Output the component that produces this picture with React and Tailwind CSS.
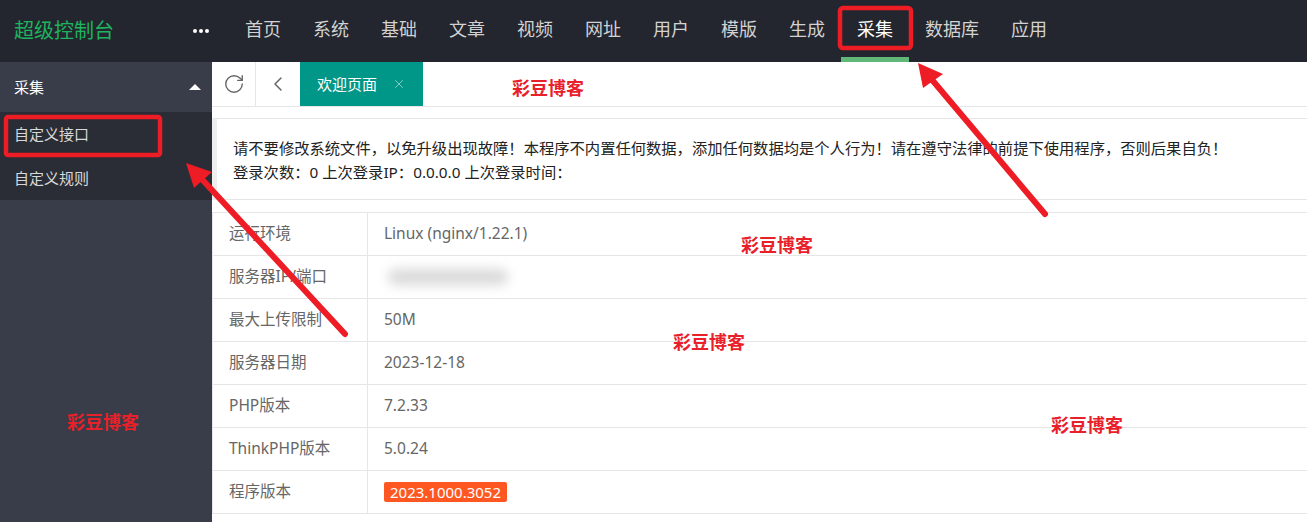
import React from "react";
import { RotateCw, ChevronLeft, X } from "lucide-react";

const navItems = ["首页", "系统", "基础", "文章", "视频", "网址", "用户", "模版", "生成", "采集", "数据库", "应用"];

const rows = [
  ["运行环境", "Linux (nginx/1.22.1)"],
  ["服务器IP/端口", "blur"],
  ["最大上传限制", "50M"],
  ["服务器日期", "2023-12-18"],
  ["PHP版本", "7.2.33"],
  ["ThinkPHP版本", "5.0.24"],
  ["程序版本", "badge"],
];

const marks = [
  "left-[512px] top-[77px]",
  "left-[741px] top-[234px]",
  "left-[673px] top-[331px]",
  "left-[67px] top-[411px]",
  "left-[1051px] top-[414px]",
];

function Header() {
  return (
    <div className="h-[62px] bg-[#23262e] flex items-center shrink-0">
      <div className="w-[193px] pl-[14px] text-[20px] text-[#1fb35f]">超级控制台</div>
      <div className="w-[36px] flex items-center gap-[2px]">
        <span className="w-[4px] h-[4px] bg-white rounded-full" />
        <span className="w-[4px] h-[4px] bg-white rounded-full" />
        <span className="w-[4px] h-[4px] bg-white rounded-full" />
      </div>
      <div className="flex h-full">
        {navItems.map((n) => (
          <div
            key={n}
            className={
              "px-4 h-full flex items-center text-[18px] border-b-[5px] pt-[1px] " +
              (n === "采集" ? "text-white border-[#5fb878]" : "text-[#d2d2d2] border-transparent")
            }
          >
            {n}
          </div>
        ))}
      </div>
    </div>
  );
}

function Sidebar() {
  return (
    <div className="w-[212px] bg-[#393d49] shrink-0">
      <div className="h-[50px] flex items-center justify-between pl-[14px] pr-[11px] text-[15px] text-white">
        <span>采集</span>
        <span className="w-0 h-0 border-x-[6px] border-x-transparent border-b-[6px] border-b-white" />
      </div>
      <div className="bg-[#2a2d35]">
        <div className="h-[44px] flex items-center pl-[14px] text-[15px] text-[#d8d8d8]">自定义接口</div>
        <div className="h-[44px] flex items-center pl-[14px] text-[15px] text-[#d8d8d8]">自定义规则</div>
      </div>
    </div>
  );
}

function Tabs() {
  return (
    <div className="h-[45px] border-b border-[#e6e6e6] flex shrink-0">
      <div className="w-[44px] flex items-center justify-center border-r border-[#e6e6e6] text-[#666]">
        <RotateCw size={22} strokeWidth={1.5} />
      </div>
      <div className="w-[44px] flex items-center justify-center text-[#666]">
        <ChevronLeft size={24} strokeWidth={1.5} />
      </div>
      <div className="w-[123px] bg-[#009688] flex items-center pl-[17px] gap-[15px] text-white text-[15px]">
        <span>欢迎页面</span>
        <X size={14} strokeWidth={1.4} className="text-[#9fd8d2]" />
      </div>
    </div>
  );
}

function Notice() {
  return (
    <div className="mt-[11px] border-y border-[#e6e6e6] border-l-[5px] border-l-[#eeeeee] pl-[16px] pt-[17px] pb-[15px] text-[15.3px] leading-[24px] text-[#222]">
      <div>请不要修改系统文件，以免升级出现故障！本程序不内置任何数据，添加任何数据均是个人行为！请在遵守法律的前提下使用程序，否则后果自负！</div>
      <div>登录次数：0 上次登录IP：0.0.0.0 上次登录时间：</div>
    </div>
  );
}

function InfoTable() {
  return (
    <div className="mt-[12px] border-t border-l border-[#e6e6e6] text-[15.5px] text-[#666]">
      {rows.map(([k, v]) => (
        <div key={k} className="h-[43px] flex border-b border-[#e6e6e6]">
          <div className="w-[155px] flex items-center pl-[16px] border-r border-[#e6e6e6]">{k}</div>
          <div className="flex-1 flex items-center pl-[16px]">
            {v === "blur" ? (
              <div className="w-[120px] h-[16px] bg-[#d9d9d9] rounded-full blur-[6px] ml-[4px]" />
            ) : v === "badge" ? (
              <span className="bg-[#ff5722] text-white px-[6px] h-[20px] leading-[20px] rounded-[2px] text-[15px]">2023.1000.3052</span>
            ) : (
              v
            )}
          </div>
        </div>
      ))}
    </div>
  );
}

function Annotations() {
  return (
    <>
      <svg className="absolute left-0 top-0 pointer-events-none" width="1307" height="522">
        <rect x="840" y="8" width="71" height="40" rx="3" fill="none" stroke="#ee1c25" strokeWidth="4.5" />
        <rect x="6" y="117" width="154" height="38" rx="2" fill="none" stroke="#ee1c25" strokeWidth="4.5" />
        <line x1="1045" y1="214" x2="928" y2="75" stroke="#ee1c25" strokeWidth="6" strokeLinecap="round" />
        <polygon points="918,63 923,88 943,74" fill="#ee1c25" />
        <line x1="345" y1="334" x2="198" y2="175" stroke="#ee1c25" strokeWidth="6" strokeLinecap="round" />
        <polygon points="186,163 194,188 212,172" fill="#ee1c25" />
      </svg>
      {marks.map((m) => (
        <span key={m} className={"absolute text-[18px] font-bold text-[#e8202a] leading-[22px] " + m}>
          彩豆博客
        </span>
      ))}
    </>
  );
}

export default function App() {
  return (
    <div
      className="relative w-[1307px] h-[522px] overflow-hidden flex flex-col bg-white"
      style={{ fontFamily: '"Noto Sans", "Noto Sans CJK SC", sans-serif' }}
    >
      <Header />
      <div className="flex flex-1 min-h-0">
        <Sidebar />
        <div className="flex-1 flex flex-col">
          <Tabs />
          <Notice />
          <InfoTable />
        </div>
      </div>
      <Annotations />
    </div>
  );
}
